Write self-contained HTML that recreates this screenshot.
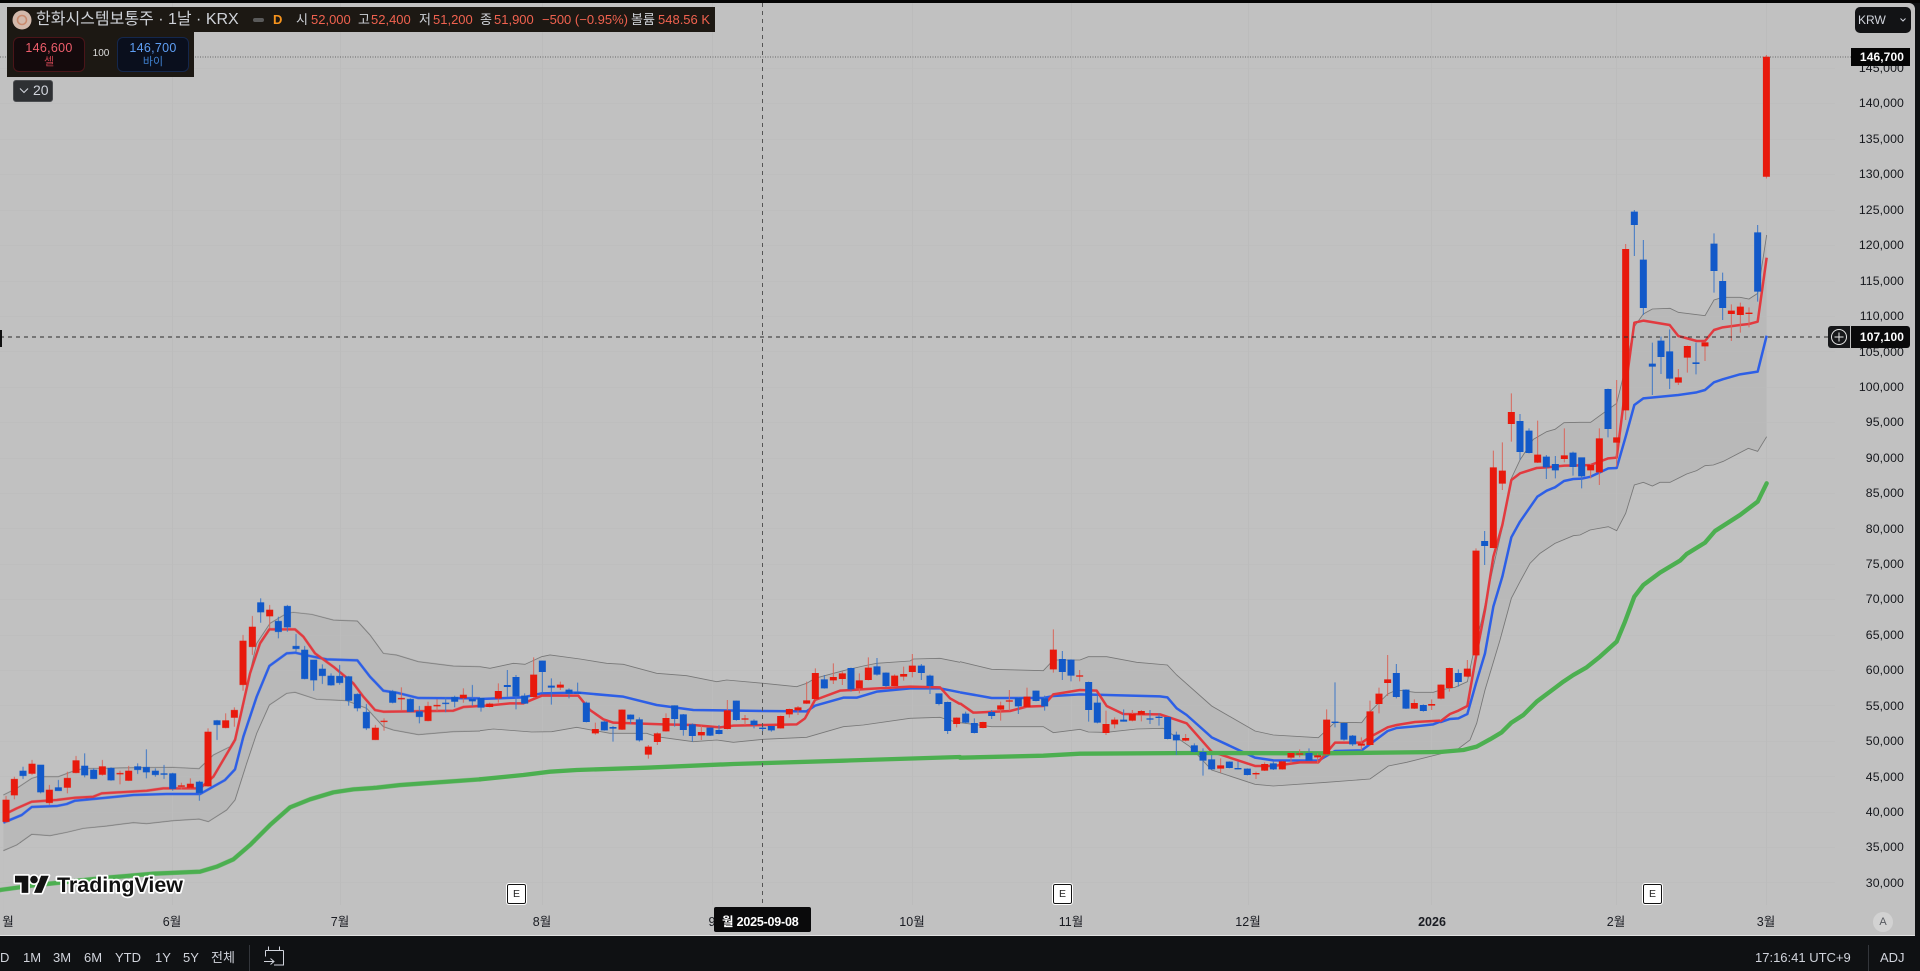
<!DOCTYPE html>
<html lang="ko"><head><meta charset="utf-8"><title>Chart</title>
<style>
html,body{margin:0;padding:0;width:1920px;height:971px;overflow:hidden;background:#0f1113}
body{font-family:"Liberation Sans","Noto Sans CJK KR",sans-serif;position:relative}
#chart{position:absolute;left:0;top:3px;width:1915px;height:932px;background:#c1c1c1;border-top-right-radius:6px}
#top{position:absolute;left:0;top:0;width:1920px;height:3px;background:#050505}
#bar{position:absolute;left:0;top:936px;width:1920px;height:35px;background:#0f1113}
#line{position:absolute;left:0;top:935px;width:1915px;height:1px;background:#e2e2e2}
svg{position:absolute;left:0;top:0}
.t{position:absolute;white-space:nowrap;line-height:16px}
.p{right:16px;width:80px;text-align:right;font-size:12.3px;color:#15171c;letter-spacing:.1px;height:16px}
.m{font-size:12.5px;color:#1a1c22;transform:translateX(-50%);top:914px}
.l{font-size:13px;color:#cfd2d8;top:12px}
.r{font-size:13px;color:#f0624f;top:12px}
.b{font-size:13px;color:#d1d4dc;top:950px}
.e{position:absolute;top:884px;width:17px;height:18px;background:#fff;border:1px solid #111;outline:1px solid #fff;border-radius:2px;font-size:10.5px;color:#222;text-align:center;line-height:18px}
</style></head><body>
<div id="top"></div>
<div id="chart"></div>
<svg width="1920" height="971" viewBox="0 0 1920 971" fill="none">
<defs>
<style>
.rw{stroke:#d8675c;stroke-width:3}.bw{stroke:#3f78c6;stroke-width:3}
.rb{stroke:#e8190c;stroke-width:21}.bb{stroke:#1259c9;stroke-width:21}
.u,.w{stroke:#777;stroke-width:2.6}
.rl{stroke:#e23a3f;stroke-width:7.5;stroke-linejoin:round}
.bl{stroke:#2d5fe6;stroke-width:7.5;stroke-linejoin:round}
.gl{stroke:#4caf50;stroke-width:13;stroke-linejoin:round;stroke-linecap:round}
</style>
</defs>
<!-- bands -->
<g transform="translate(0,580) scale(.33333)">
<polygon fill="#b9b9b9" points="10,645 50,625 95,595 112,590 175,590 215,575 250,565 300,565 400,563 520,562 597,566 640,525 690,500 705,475 740,320 770,190 810,130 860,100 880,97 935,103 1000,120 1072,123 1110,165 1150,220 1190,225 1255,245 1360,258 1440,260 1440,1068 10,1068"/>
<polygon fill="#c1c1c1" points="10,812 50,795 95,763 150,767 200,757 250,745 320,738 400,728 440,731 520,722 597,717 625,725 680,690 705,660 740,550 770,460 808,375 860,340 885,337 950,358 1000,360 1040,362 1100,385 1150,440 1180,450 1255,464 1360,455 1440,453 1440,1068 10,1068"/>
</g>
<g transform="translate(480,630) scale(.33333)">
<polygon fill="#b9b9b9" points="0,110 30,115 100,100 135,103 185,80 210,75 300,87 380,100 430,103 530,130 620,137 710,155 740,150 850,160 950,170 980,160 1005,145 1090,122 1150,108 1190,100 1290,93 1300,87 1380,85 1440,97 1440,918 0,918"/>
<polygon fill="#c1c1c1" points="0,302 40,297 155,306 215,305 290,292 390,310 500,310 530,320 640,335 710,330 760,337 850,328 980,322 1090,290 1150,285 1290,265 1380,262 1440,280 1440,918 0,918"/>
</g>
<g transform="translate(960,600) scale(.33333)">
<polygon fill="#b9b9b9" points="0,185 95,208 250,212 280,180 360,180 385,170 440,170 530,187 622,195 650,225 755,318 885,393 940,405 1075,413 1125,367 1205,368 1230,335 1283,282 1310,270 1365,277 1420,277 1440,270 1440,1008 0,1008"/>
<polygon fill="#c1c1c1" points="0,368 95,380 250,380 280,398 360,388 385,396 440,397 530,387 610,385 690,440 755,510 885,553 940,558 1100,547 1230,537 1285,498 1340,487 1440,462 1440,1008 0,1008"/>
</g>
<g transform="translate(1440,400) scale(.33333)">
<polygon fill="#b9b9b9" points="0,870 45,862 82,845 100,760 125,660 160,500 190,370 214,235 240,180 280,118 320,95 345,88 372,68 420,67 452,67 530,10 557,-100 583,-220 610,-258 637,-273 690,-275 715,-263 795,-253 822,-300 848,-308 900,-308 927,-303 953,-320 980,-495 980,1608 0,1608"/>
<polygon fill="#c1c1c1" points="0,1062 50,1050 90,1020 110,970 135,870 180,720 214,595 240,545 270,490 300,460 345,430 400,407 420,405 450,390 505,380 530,392 557,340 583,255 610,247 637,258 660,247 690,247 740,222 770,212 795,197 820,195 850,184 925,145 953,154 980,110 980,1608 0,1608"/>
</g>
<!-- grid -->
<g stroke="#bcbcbc" stroke-width="1">
<path d="M172.5 3V905M340.5 3V905M542.5 3V905M712.5 3V905M912.5 3V905M1071.5 3V905M1248.5 3V905M1431.5 3V905M1616.5 3V905M1766.5 3V905"/>
<path d="M0 68.500H1835M0 103.500H1835M0 139.500H1835M0 174.500H1835M0 210.500H1835M0 245.500H1835M0 281.500H1835M0 316.500H1835M0 351.500H1835M0 387.500H1835M0 422.500H1835M0 458.500H1835M0 493.500H1835M0 528.500H1835M0 564.500H1835M0 599.500H1835M0 635.500H1835M0 670.500H1835M0 705.500H1835M0 741.500H1835M0 776.500H1835M0 812.500H1835M0 847.500H1835M0 882.500H1835" opacity=".5"/>
</g>
<!-- price line -->
<path d="M0 57H1851" stroke="#666" stroke-width="1" stroke-dasharray="1 1.5"/>
<g style="filter:blur(.35px)">
<!-- group 1 -->
<g transform="translate(0,580) scale(.33333)">
<polyline class="u" points="10,645 50,625 95,595 112,590 175,590 215,575 250,565 300,565 400,563 520,562 597,566 640,525 690,500 705,475 740,320 770,190 810,130 860,100 880,97 935,103 1000,120 1072,123 1110,165 1150,220 1190,225 1255,245 1360,258 1440,260"/>
<polyline class="w" points="10,812 50,795 95,763 150,767 200,757 250,745 320,738 400,728 440,731 520,722 597,717 625,725 680,690 705,660 740,550 770,460 808,375 860,340 885,337 950,358 1000,360 1040,362 1100,385 1150,440 1180,450 1255,464 1360,455 1440,453"/>
<polyline class="gl" points="0,930 110,915 320,893 460,881 600,875 650,860 700,838 750,795 810,735 870,682 930,658 1000,637 1060,628 1130,623 1200,615 1300,608 1440,598"/>
<polyline class="bl" points="10,728 65,705 95,681 170,678 200,672 225,662 330,652 400,645 500,642 600,642 675,600 705,568 730,470 770,350 808,258 860,220 885,218 930,228 980,238 1072,241 1110,290 1150,332 1190,338 1255,354 1440,355"/>
<polyline class="rl" points="10,705 50,685 95,665 170,660 225,653 280,650 305,640 440,632 490,625 600,625 640,590 705,480 750,280 780,190 808,148 885,148 910,170 945,220 1000,260 1060,310 1090,350 1125,390 1150,395 1231,394 1360,392 1390,381 1440,378"/>
<path class="rw" d="M18 648V728M43 590V658M96 540V585M148 615V675M202 575V640M228 528V580M307 540V587M360 572V613M386 558V603M544 608V628M571 595V625M624 445V620M677 400V445M703 382V440M729 165V332M757 108V225M809 75V145M1126 435V480M1152 415V452M1204 322V392M1284 365V424M1311 358V393M1390 325V368"/>
<path class="bw" d="M69 560V597M122 555V640M175 600V632M254 520V592M281 565V597M333 562V602M413 550V582M439 508V595M466 565V590M492 555V597M518 578V632M598 602V662M651 420V480M782 55V128M835 110V175M862 75V155M888 162V215M914 198V298M941 240V332M967 253V312M993 280V317M1019 255V314M1046 288V377M1072 340V394M1099 372V450M1178 330V370M1231 355V397M1258 378V430M1337 352V397M1364 347V382M1417 315V378"/>
<path class="rb" d="M18 659V726M43 597V646M96 551V581M148 629V669M202 594V623M228 541V579M307 559V584M360 579V583M386 572V602M544 616V620M571 611V623M624 455V619M677 421V444M703 390V413M729 182V315M757 140V201M809 89V109M1126 443V480M1152 422V426M1204 354V358M1284 378V423M1311 375V379M1390 344V355"/>
<path class="bb" d="M69 572V588M122 554V637M175 622V633M254 557V586M281 569V597M333 564V601M413 559V570M439 561V577M466 572V585M492 580V584M518 580V627M598 605V639M651 421V435M782 67V97M835 123V156M862 78V142M888 198V207M914 209V297M941 239V301M967 266V288M993 287V316M1019 288V309M1046 289V362M1072 342V385M1099 396V445M1178 334V368M1231 357V396M1258 394V411M1337 368V372M1364 351V365M1417 357V364"/>
</g>
<!-- group 2 -->
<g transform="translate(480,630) scale(.33333)">
<polyline class="u" points="0,110 30,115 100,100 135,103 185,80 210,75 300,87 380,100 430,103 530,130 620,137 710,155 740,150 850,160 950,170 980,160 1005,145 1090,122 1150,108 1190,100 1290,93 1300,87 1380,85 1440,97"/>
<polyline class="w" points="0,302 40,297 155,306 215,305 290,292 390,310 500,310 530,320 640,335 710,330 760,337 850,328 980,322 1090,290 1150,285 1290,265 1380,262 1440,280"/>
<polyline class="gl" points="0,448 130,435 210,425 290,420 500,413 760,402 1090,392 1440,381"/>
<polyline class="bl" points="0,207 130,202 185,190 295,188 430,200 530,225 640,240 850,243 980,244 1005,227 1090,203 1130,203 1190,185 1290,175 1380,175 1440,187"/>
<polyline class="rl" points="0,228 30,226 90,220 130,220 185,197 295,197 330,240 370,268 400,278 550,283 640,285 720,292 760,287 950,283 975,265 1005,210 1080,182 1180,176 1290,170 1380,172 1410,205 1440,222"/>
<path class="rw" d="M29 218V232M55 160V218M161 82V202M241 155V180M346 278V314M426 238V300M505 345V386M532 307V345M558 250V305M664 287V330M742 210V298M795 255V285M902 257V296M928 236V263M954 228V255M980 155V222M1006 115V208M1060 100V162M1087 125V165M1138 130V190M1165 82V151M1244 133V169M1271 110V152M1297 72V142M1430 262V292"/>
<path class="bw" d="M3 205V245M82 120V200M108 135V238M134 190V222M187 92V190M214 145V224M267 175V205M293 158V192M319 215V277M373 272V302M399 288V335M452 253V282M478 262V335M584 226V290M610 252V317M637 280V335M690 293V318M717 285V313M769 212V272M822 268V295M848 285V303M874 288V305M1033 135V176M1113 113V185M1191 84V137M1218 127V172M1324 102V150M1350 134V192M1377 190V226M1403 215V312"/>
<path class="rb" d="M29 221V231M55 183V206M161 134V201M241 164V173M346 297V310M426 239V299M505 350V374M532 310V336M558 264V304M664 306V316M742 241V297M795 265V269M902 258V295M928 237V253M954 232V241M980 211V221M1006 129V207M1060 141V151M1087 130V147M1138 151V175M1165 113V150M1244 137V168M1271 132V140M1297 107V126M1430 263V282"/>
<path class="bb" d="M3 204V233M82 165V171M108 141V199M134 197V221M187 92V126M214 167V173M267 179V191M293 187V191M319 218V276M373 275V301M399 291V296M452 254V268M478 268V331M584 226V267M610 253V300M637 283V318M690 293V317M717 300V312M769 212V270M822 272V285M848 293V297M874 288V301M1033 148V175M1113 114V178M1191 109V134M1218 128V168M1324 107V129M1350 137V168M1377 190V222M1403 216V303"/>
</g>
<!-- group 3 -->
<g transform="translate(960,600) scale(.33333)">
<polyline class="u" points="0,185 95,208 250,212 280,180 360,180 385,170 440,170 530,187 622,195 650,225 755,318 885,393 940,405 1075,413 1125,367 1205,368 1230,335 1283,282 1310,270 1365,277 1420,277 1440,270"/>
<polyline class="w" points="0,368 95,380 250,380 280,398 360,388 385,396 440,397 530,387 610,385 690,440 755,510 885,553 940,558 1100,547 1230,537 1285,498 1340,487 1440,462"/>
<polyline class="bl" points="0,277 95,294 250,294 280,288 360,283 600,289 622,292 650,325 680,345 755,412 885,473 940,481 1075,482 1125,453 1205,451 1283,393 1310,384 1365,379 1420,373 1440,365"/>
<polyline class="rl" points="0,310 40,338 150,333 200,320 250,318 280,283 360,270 410,272 440,318 490,342 600,343 680,370 755,455 885,498 940,498 1020,487 1075,487 1125,428 1205,428 1232,410 1283,382 1310,375 1365,366 1440,362"/>
<polyline class="gl" points="0,473 250,467 360,461 700,459 1090,460 1440,456"/>
<path class="rw" d="M69 365V385M122 305V362M148 270V332M201 263V322M280 88V218M359 210V244M438 332V405M464 352V385M517 330V364M544 330V364M677 402V424M782 475V518M888 515V537M914 487V513M967 483V509M993 458V490M1019 448V472M1073 460V492M1100 328V464M1204 412V450M1230 302V437M1257 263V340M1283 165V288M1363 298V327M1415 298V330"/>
<path class="bw" d="M17 335V370M43 355V400M95 330V357M175 292V342M228 272V304M254 287V332M307 153V240M333 178V244M386 245V365M412 283V370M491 328V365M570 330V372M597 340V377M623 350V418M649 395V465M703 430V457M729 445V527M755 465V510M808 484V505M834 485V508M862 505V526M940 485V510M1047 445V483M1125 247V382M1152 368V422M1178 405V438M1309 192V295M1338 268V327M1390 313V335"/>
<path class="rb" d="M69 366V384M122 316V329M148 301V305M201 290V321M280 149V208M359 226V230M438 372V399M464 359V373M517 342V362M544 333V344M677 414V422M782 496V506M888 519V523M914 492V512M967 484V508M993 459V473M1019 460V464M1073 466V472M1100 359V463M1204 431V437M1230 334V435M1257 281V312M1283 238V249M1363 309V326M1415 312V317"/>
<path class="bb" d="M17 341V368M43 369V399M95 336V348M175 294V319M228 272V303M254 295V319M307 177V216M333 179V227M386 246V330M412 308V368M491 359V365M570 355V359M597 350V354M623 351V417M649 404V421M703 436V456M729 456V482M755 478V508M808 485V504M834 504V508M862 506V525M940 490V508M1047 459V482M1125 365V369M1152 369V419M1178 407V433M1309 219V291M1338 269V326M1390 315V333"/>
</g>
<!-- group 4 -->
<g transform="translate(1440,400) scale(.33333)">
<polyline class="u" points="0,870 45,862 82,845 100,760 125,660 160,500 190,370 214,235 240,180 280,118 320,95 345,88 372,68 420,67 452,67 530,10 557,-100 583,-220 610,-258 637,-273 690,-275 715,-263 795,-253 822,-300 848,-308 900,-308 927,-303 953,-320 980,-495"/>
<polyline class="w" points="0,1062 50,1050 90,1020 110,970 135,870 180,720 214,595 240,545 270,490 300,460 345,430 400,407 420,405 450,390 505,380 530,392 557,340 583,255 610,247 637,258 660,247 690,247 740,222 770,212 795,197 820,195 850,184 925,145 953,154 980,110"/>
<polyline class="gl" points="0,1056 70,1050 110,1040 150,1018 185,997 214,968 250,945 290,905 370,845 400,825 440,802 480,770 530,725 555,665 583,590 610,555 660,518 720,482 740,462 795,428 825,393 900,345 953,305 980,250"/>
<polyline class="bl" points="0,967 30,957 55,955 82,942 108,850 135,760 160,620 187,530 214,412 240,365 292,290 320,272 345,262 372,243 400,237 425,236 452,230 505,205 530,204 557,110 583,15 610,-5 715,-15 770,-23 795,-30 822,-53 848,-62 900,-77 953,-85 980,-193"/>
<polyline class="rl" points="0,965 30,942 55,932 82,918 108,770 135,630 160,470 187,375 214,240 240,220 290,204 320,202 373,197 425,196 452,195 505,175 530,173 557,-40 583,-232 610,-238 689,-225 715,-192 770,-177 795,-177 822,-210 848,-218 900,-225 927,-228 953,-235 980,-427"/>
<path class="rw" d="M3 853V898M28 803V875M82 780V832M108 445V767M160 152V445M187 127V270M214 -20V125M293 62V189M373 85V187"/>
<path class="bw" d="M55 808V860M134 393V495M240 42V180M267 85V160M319 165V237M346 168V235M399 155V227"/>
<path class="rb" d="M3 854V896M28 804V864M82 806V830M108 452V766M160 202V444M187 212V251M214 36V72M293 164V188M373 166V177"/>
<path class="bb" d="M55 819V846M134 423V438M240 63V156M267 92V159M319 170V202M346 192V211M399 158V201"/>
</g>
<!-- group 5 -->
<g transform="translate(1580,190) scale(.33333)">
<path class="rw" d="M32 822V865M58 715V885M110 570V830M137 162V690M295 537V585M322 467V548M375 455V513M454 343V453M481 338V428M507 352V412"/>
<path class="bw" d="M5 803V895M84 596V742M163 60V198M190 150V375M217 458V615M243 440V552M269 418V597M348 458V553M402 130V308M428 248V390M533 105V335"/>
<path class="rb" d="M32 825V841M58 745V847M110 742V758M137 177V661M295 562V578M322 468V503M375 457V469M454 362V372M481 350V375M507 368V372"/>
<path class="bb" d="M5 802V859M84 597V717M163 65V105M190 209V354M217 521V530M243 452V501M269 484V566M348 517V522M402 161V243M428 273V354M533 127V305"/>
</g>
<!-- last candle -->
<path d="M1766.400 55V178.500" stroke="#d8675c" stroke-width="1"/>
<path d="M1766.400 56.700V176.700" stroke="#e8190c" stroke-width="7"/>
</g>
<!-- crosshair -->
<path d="M0 337H1828" stroke="#2a2a2a" stroke-width="1" stroke-dasharray="4 4"/>
<path d="M762.500 3V907" stroke="#555" stroke-width="1" stroke-dasharray="4 4"/>
<rect x="0" y="330" width="2" height="17" fill="#111"/>
<!-- TV logo -->
<g transform="translate(15,872) scale(.95)" fill="#111" stroke="#fff" stroke-width="3.400" paint-order="stroke" stroke-linejoin="round">
<path d="M14 22H7V11H0V4h14v18zM28 22h-8l7.500-18h8L28 22z"/>
<circle cx="20" cy="8" r="4"/>
</g>
<text x="57" y="892" font-family="Liberation Sans" font-size="21" font-weight="bold" fill="#111" stroke="#fff" stroke-width="3.400" paint-order="stroke" stroke-linejoin="round" textLength="126" lengthAdjust="spacingAndGlyphs">TradingView</text>
</svg>

<!-- price axis -->
<div class="t p" style="top:60px">145,000</div>
<div class="t p" style="top:95px">140,000</div>
<div class="t p" style="top:131px">135,000</div>
<div class="t p" style="top:166px">130,000</div>
<div class="t p" style="top:202px">125,000</div>
<div class="t p" style="top:237px">120,000</div>
<div class="t p" style="top:273px">115,000</div>
<div class="t p" style="top:308px">110,000</div>
<div class="t p" style="top:344px">105,000</div>
<div class="t p" style="top:379px">100,000</div>
<div class="t p" style="top:414px">95,000</div>
<div class="t p" style="top:450px">90,000</div>
<div class="t p" style="top:485px">85,000</div>
<div class="t p" style="top:521px">80,000</div>
<div class="t p" style="top:556px">75,000</div>
<div class="t p" style="top:591px">70,000</div>
<div class="t p" style="top:627px">65,000</div>
<div class="t p" style="top:662px">60,000</div>
<div class="t p" style="top:698px">55,000</div>
<div class="t p" style="top:733px">50,000</div>
<div class="t p" style="top:769px">45,000</div>
<div class="t p" style="top:804px">40,000</div>
<div class="t p" style="top:839px">35,000</div>
<div class="t p" style="top:875px">30,000</div>

<!-- KRW -->
<div style="position:absolute;left:1855px;top:7px;width:56px;height:26px;background:#121315;border-radius:5px"></div>
<div class="t" style="left:1858px;top:12px;font-size:12px;color:#d1d4dc">KRW</div>
<svg style="left:1899px;top:17px" width="8" height="6" viewBox="0 0 8 6" fill="none"><path d="M1.500 1.500 4 4l2.500-2.500" stroke="#d1d4dc" stroke-width="1"/></svg>

<!-- price tags -->
<div style="position:absolute;left:1851px;top:48px;width:59px;height:18px;background:#050505"></div>
<div class="t p" style="top:49px;color:#fff;font-weight:bold;font-size:12px">146,700</div>
<div style="position:absolute;left:1828px;top:326px;width:22px;height:22px;background:#17181a;border-radius:3px 0 0 3px"></div>
<div style="position:absolute;left:1851px;top:326px;width:59px;height:22px;background:#0a0a0b;border-radius:0 3px 3px 0"></div>
<svg style="left:1829px;top:327px" width="20" height="20" viewBox="0 0 20 20" fill="none"><circle cx="10" cy="10" r="7.500" stroke="#e6e6e6"/><path d="M10 5.500v9M5.500 10h9" stroke="#e6e6e6"/></svg>
<div class="t p" style="top:329px;color:#fff;font-weight:bold;font-size:12px">107,100</div>

<!-- legend -->
<div style="position:absolute;left:7px;top:7px;width:708px;height:25px;background:#1c1813"></div>
<div style="position:absolute;left:7px;top:32px;width:187px;height:45px;background:#1c1813"></div>
<svg style="left:12px;top:10px" width="20" height="20" viewBox="0 0 20 20"><circle cx="10" cy="10" r="9.500" fill="#d3b9ac"/><circle cx="10" cy="10" r="4.500" fill="none" stroke="#c98a6e" stroke-width="1.600"/></svg>
<div class="t" style="left:36px;top:12px;font-size:16px;color:#cfd2d8;width:205px">한화시스템보통주 · 1날 · KRX</div>
<div style="position:absolute;left:253px;top:18px;width:11px;height:4px;background:#5a5a5a;border-radius:2px"></div>
<div class="t" style="left:273px;top:12px;font-size:13px;font-weight:bold;color:#f7941d">D</div>
<div class="t l" style="left:296px">시</div><div class="t r" style="left:311px">52,000</div>
<div class="t l" style="left:358px">고</div><div class="t r" style="left:371px">52,400</div>
<div class="t l" style="left:419px">저</div><div class="t r" style="left:433px">51,200</div>
<div class="t l" style="left:480px">종</div><div class="t r" style="left:494px">51,900</div>
<div class="t r" style="left:542px">−500 (−0.95%)</div>
<div class="t l" style="left:631px">볼륨</div><div class="t r" style="left:658px">548.56 K</div>

<!-- sell / buy -->
<div style="position:absolute;left:13px;top:37px;width:70px;height:33px;background:#140a0c;border:1px solid #4a1519;border-radius:6px"></div>
<div class="t" style="left:13px;width:72px;text-align:center;top:40px;font-size:12.500px;color:#ef5e6c;letter-spacing:.3px">146,600</div>
<div class="t" style="left:13px;width:72px;text-align:center;top:54px;font-size:11px;color:#c2424f">셀</div>
<div class="t" style="left:88px;width:26px;text-align:center;top:46px;font-size:10px;color:#dcdcdc">100</div>
<div style="position:absolute;left:117px;top:37px;width:70px;height:33px;background:#0a0f1d;border:1px solid #14274d;border-radius:6px"></div>
<div class="t" style="left:117px;width:72px;text-align:center;top:40px;font-size:12.500px;color:#5f9ff5;letter-spacing:.3px">146,700</div>
<div class="t" style="left:117px;width:72px;text-align:center;top:54px;font-size:11px;color:#3f80cf">바이</div>

<!-- collapse pill -->
<div style="position:absolute;left:13px;top:80px;width:38px;height:20px;background:#2e3033;border:1px solid #4b4d50;border-radius:3px"></div>
<svg style="left:19px;top:87px" width="10" height="8" viewBox="0 0 10 8" fill="none"><path d="M1 1.500 5 5.500l4-4" stroke="#d1d4dc" stroke-width="1.100"/></svg>
<div class="t" style="left:33px;top:82px;font-size:14px;color:#d1d4dc">20</div>

<!-- earnings -->
<div class="e" style="left:507px">E</div>
<div class="e" style="left:1053px">E</div>
<div class="e" style="left:1643px">E</div>

<!-- time axis -->
<div class="t m" style="left:8px">월</div>
<div class="t m" style="left:172px">6월</div>
<div class="t m" style="left:340px">7월</div>
<div class="t m" style="left:542px">8월</div>
<div class="t m" style="left:712px">9</div>
<div class="t m" style="left:912px">10월</div>
<div class="t m" style="left:1071px">11월</div>
<div class="t m" style="left:1248px">12월</div>
<div class="t m" style="left:1432px;font-weight:bold">2026</div>
<div class="t m" style="left:1616px">2월</div>
<div class="t m" style="left:1766px">3월</div>
<div style="position:absolute;left:714px;top:907px;width:97px;height:25px;background:#0a0a0b;border-radius:2px"></div>
<div class="t" style="left:722px;top:914px;font-size:12.500px;color:#fff;font-weight:bold;letter-spacing:-.2px">월 2025-09-08</div>
<div style="position:absolute;left:1873px;top:912px;width:20px;height:20px;border-radius:50%;background:#d2d2d2"></div>
<div class="t" style="left:1873px;width:20px;text-align:center;top:914px;font-size:11px;color:#55585e">A</div>

<div id="line"></div>
<div id="bar"></div>
<div class="t b" style="left:0">D</div>
<div class="t b" style="left:23px">1M</div>
<div class="t b" style="left:53px">3M</div>
<div class="t b" style="left:84px">6M</div>
<div class="t b" style="left:115px">YTD</div>
<div class="t b" style="left:155px">1Y</div>
<div class="t b" style="left:183px">5Y</div>
<div class="t b" style="left:211px">전체</div>
<div style="position:absolute;left:249px;top:945px;width:1px;height:26px;background:#33363b"></div>
<svg style="left:260px;top:944px" width="28" height="26" viewBox="0 0 28 26" fill="none" stroke="#d1d4dc" stroke-width="1"><path d="M8.500 2.500v4M19.500 2.500v4M5.500 6.500h18M5.500 6.500v6M23.500 6.500v14.500H14"/><path d="M4 17.500h10m-3.500-3 3.500 3-3.500 3"/></svg>
<div class="t b" style="left:1755px">17:16:41 UTC+9</div>
<div style="position:absolute;left:1868px;top:945px;width:1px;height:26px;background:#33363b"></div>
<div class="t b" style="left:1880px">ADJ</div>
</body></html>
